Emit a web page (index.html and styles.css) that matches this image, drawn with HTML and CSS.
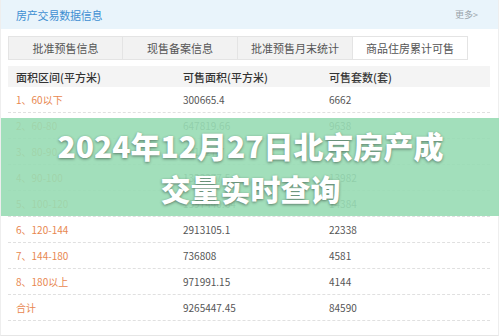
FILE: index.html
```html
<!DOCTYPE html>
<html lang="zh">
<head>
<meta charset="utf-8">
<link rel="stylesheet" href="styles.css">
</head>
<body>
<div class="page">
  <div class="head">
    <span class="title">房产交易数据信息</span>
    <span class="more">更多&gt;</span>
  </div>
  <div class="tabs">
    <div class="tab">批准预售信息</div>
    <div class="tab">现售备案信息</div>
    <div class="tab">批准预售月末统计</div>
    <div class="tab active">商品住房累计可售</div>
  </div>
  <div class="table">
    <div class="row thead"><span>面积区间(平方米)</span><span>可售面积(平方米)</span><span>可售套数(套)</span></div>
    <div class="row"><span class="k">1、60以下</span><span>300665.4</span><span>6662</span></div>
    <div class="row"><span class="k">2、60-80</span><span>647819.66</span><span>9638</span></div>
    <div class="row"><span class="k">3、80-90</span><span>801127.7</span><span>8711</span></div>
    <div class="row"><span class="k">4、90-100</span><span>1323277.5</span><span>13982</span></div>
    <div class="row"><span class="k">5、100-120</span><span>1597440.64</span><span>14384</span></div>
    <div class="row"><span class="k">6、120-144</span><span>2913105.1</span><span>22338</span></div>
    <div class="row"><span class="k">7、144-180</span><span>736808</span><span>4581</span></div>
    <div class="row"><span class="k">8、180以上</span><span>971991.15</span><span>4144</span></div>
    <div class="row"><span class="k">合计</span><span>9265447.45</span><span>84590</span></div>
  </div>
  <div class="banner">
    <h1>2024年12月27日北京房产成<br>交量实时查询</h1>
  </div>
</div>
</body>
</html>
```
FILE: styles.css
```css
html, body {
  margin: 0;
  padding: 0;
  background: #ffffff;
}
body {
  font-family: "Noto Sans CJK SC", "Microsoft YaHei", sans-serif;
  width: 499px;
  height: 336px;
  overflow: hidden;
}
.page {
  position: relative;
  width: 499px;
  height: 336px;
  box-sizing: border-box;
  border-left: 1px solid #eeeeee;
  border-right: 1px solid #eeeeee;
  border-bottom: 1px solid #e6e6e6;
}
.head {
  height: 29px;
  background: #e9f4fb;
  display: flex;
  align-items: center;
  justify-content: space-between;
  padding: 0 20px 0 15px;
}
.title {
  font-size: 11px;
  color: #3e8fd2;
  letter-spacing: -0.2px;
}
.more {
  font-size: 9px;
  color: #9aa4ab;
}
.tabs {
  display: flex;
  margin: 7px 0 0 7px;
  height: 24px;
}
.tab {
  width: 115px;
  box-sizing: border-box;
  background: #f2f2f2;
  border: 1px solid #e4e4e4;
  border-left: none;
  font-size: 11px;
  color: #555555;
  display: flex;
  align-items: center;
  justify-content: center;
}
.tab:first-child {
  border-left: 1px solid #e4e4e4;
}
.tab.active {
  background: #ffffff;
}
.table {
  margin: 6px 8px 0 7px;
}
.row {
  display: flex;
  height: 26px;
  align-items: center;
  border-bottom: 1px dashed #e0e0e0;
  box-sizing: border-box;
  font-size: 10px;
  color: #555555;
}
.row span {
  padding-left: 8px;
}
.row span:nth-child(1) { width: 167px; box-sizing: border-box; }
.row span:nth-child(2) { width: 146px; box-sizing: border-box; }
.row span:nth-child(3) { flex: 1; }
.row .k {
  color: #e8874f;
}
.row.thead {
  height: 21px;
  background: #f4f4f4;
  border-bottom: none;
  font-size: 11px;
  font-weight: 500;
  color: #333333;
}
.banner {
  position: absolute;
  left: 0;
  top: 118px;
  width: 499px;
  height: 98px;
  background: rgba(152, 219, 180, 0.9);
  display: flex;
  align-items: center;
  justify-content: center;
}
.banner h1 {
  margin: 0;
  font-size: 30px;
  line-height: 43px;
  font-weight: 900;
  color: #ffffff;
  text-align: center;
  letter-spacing: 0;
  text-shadow: 0 1px 3px rgba(0, 0, 0, 0.45);
}
```
